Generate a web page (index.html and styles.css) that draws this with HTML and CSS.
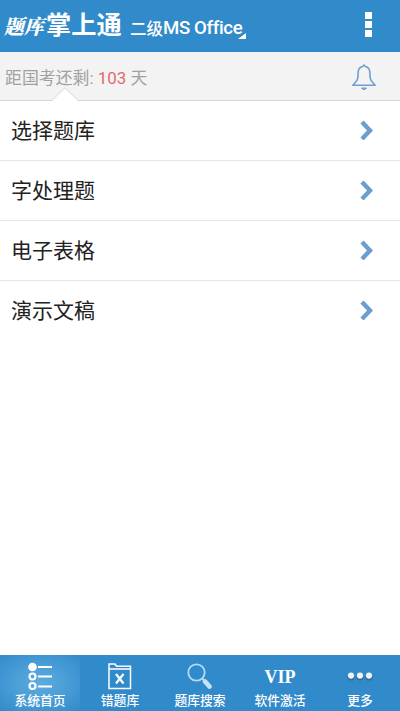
FILE: index.html
```html
<!DOCTYPE html>
<html lang="zh-CN">
<head>
<meta charset="utf-8">
<title>题库掌上通</title>
<link rel="stylesheet" href="styles.css">
</head>
<body>
<div class="app">
  <header class="header">
    <div class="brand"><span class="brush">题库</span><span class="name">掌上通</span></div>
    <div class="subject"><span class="level">二级</span><span class="office">MS Office</span><i class="corner"></i></div>
    <div class="menu"><i></i><i></i><i></i></div>
  </header>
  <section class="countdown">
    <p>距国考还剩: <span class="days">103</span> 天</p>
    <svg class="bell" width="26" height="28" viewBox="0 0 26 28" fill="none" stroke="#6f9ed0" stroke-width="1.6" stroke-linejoin="round">
      <path d="M13 2.2L11.5 3.5C8.5 4.3 7.3 6 7.2 9L6.8 15C6.4 18.3 4 19.6 1.8 22.3H24.2C22 19.6 19.6 18.3 19.2 15L18.8 9C18.7 6 17.5 4.3 14.5 3.5Z"/>
      <path d="M11 25.2H15L13 26.3Z"/>
    </svg>
    <svg class="notch" width="28" height="15" viewBox="0 0 28 15"><path d="M0 15L1 13.5L14 .7L27 13.5L28 15Z" fill="#fff"/><path d="M0 13.5H1L14 .7L27 13.5H28" fill="none" stroke="#d8d8d8"/></svg>
  </section>
  <main class="list">
    <div class="row"><span>选择题库</span><svg class="chevron" width="14" height="20" viewBox="0 0 14 20"><path d="M2 2L10 10.5L2 19"/></svg></div>
    <div class="row"><span>字处理题</span><svg class="chevron" width="14" height="20" viewBox="0 0 14 20"><path d="M2 2L10 10.5L2 19"/></svg></div>
    <div class="row"><span>电子表格</span><svg class="chevron" width="14" height="20" viewBox="0 0 14 20"><path d="M2 2L10 10.5L2 19"/></svg></div>
    <div class="row"><span>演示文稿</span><svg class="chevron" width="14" height="20" viewBox="0 0 14 20"><path d="M2 2L10 10.5L2 19"/></svg></div>
  </main>
  <nav class="tabs">
    <div class="tab active">
      <svg width="28" height="30" viewBox="0 0 28 30" fill="none" stroke="#fff"><circle cx="6.5" cy="5" r="4.3" fill="#fff" stroke="none"/><circle cx="6.5" cy="14.5" r="3" stroke-width="2.2"/><circle cx="6.5" cy="24" r="3" stroke-width="2.2"/><path d="M12 5H26M12 14.5H26M12 24.5H26" stroke-width="1.8"/></svg>
      <span>系统首页</span>
    </div>
    <div class="tab">
      <svg width="28" height="30" viewBox="0 0 28 30" fill="none" stroke="#fff" stroke-width="1.5"><path d="M3 26.5V2H9L10.5 4.2H24.5V26.5ZM3 7H24.5"/><path d="M10 12L17.5 21.5M17.5 12L10 21.5" stroke-width="2.2"/></svg>
      <span>错题库</span>
    </div>
    <div class="tab">
      <svg width="28" height="30" viewBox="0 0 28 30" fill="none"><circle cx="10.5" cy="10.5" r="8.2" stroke="#b5dbf2" stroke-width="1.8"/><path d="M16 16L18 18.5" stroke="#b5dbf2" stroke-width="2"/><path d="M19 19.5L23.5 24.5" stroke="#c5e3f5" stroke-width="4.8" stroke-linecap="round"/></svg>
      <span>题库搜索</span>
    </div>
    <div class="tab"><b class="vip">VIP</b><span>软件激活</span></div>
    <div class="tab">
      <svg width="28" height="30" viewBox="0 0 28 30"><g fill="#35698f"><circle cx="5" cy="14.9" r="3.5"/><circle cx="14" cy="14.9" r="3.5"/><circle cx="23" cy="14.9" r="3.5"/></g><g fill="#eef3f6"><circle cx="5" cy="13.6" r="3.1"/><circle cx="14" cy="13.6" r="3.1"/><circle cx="23" cy="13.6" r="3.1"/></g></svg>
      <span>更多</span>
    </div>
  </nav>
</div>
</body>
</html>
```
FILE: styles.css
```css
* { box-sizing: border-box; }
body {
  margin: 0;
  background: #fff;
  font-family: Roboto, "Noto Sans CJK SC", sans-serif;
}
.app {
  display: flex;
  flex-direction: column;
  width: 400px;
  height: 711px;
  overflow: hidden;
}
.header {
  display: flex;
  align-items: center;
  height: 52px;
  padding: 0 28px 0 4px;
  background: #318aca;
  color: #fff;
  white-space: nowrap;
}
.brand {
  display: flex;
  align-items: center;
  width: 126px;
  margin-top: -1px;
  line-height: 36px;
}
.brush {
  width: 42px;
  font: italic 900 20px/36px "Noto Serif CJK SC", "Noto Sans CJK SC", serif;
}
.name { font-size: 25.2px; font-weight: 700; }
.subject {
  display: flex;
  align-items: center;
  height: 36px;
  margin-top: 3px;
}
.level { font-size: 16.5px; font-weight: 500; }
.office { font-size: 18.6px; font-weight: 500; letter-spacing: -.35px; }
.corner {
  align-self: flex-end;
  margin: 0 0 7px -4px;
  border-left: 8px solid transparent;
  border-bottom: 6px solid #fff;
}
.menu {
  display: flex;
  flex-direction: column;
  gap: 2px;
  margin-left: auto;
  margin-top: -3px;
}
.menu i { width: 7px; height: 7px; background: #fff; }
.countdown {
  position: relative;
  display: flex;
  align-items: center;
  justify-content: space-between;
  height: 49px;
  padding: 1px 23px 0 5px;
  border-bottom: 1px solid #d8d8d8;
  background: #f3f3f3;
  color: #a1a1a1;
}
.countdown p { margin: -1px 0 0; font-size: 16.9px; font-weight: 400; }
.days { color: #e36a6c; }
.notch { position: absolute; left: 51px; bottom: -2px; }
.list { flex: 1; }
.row {
  display: flex;
  align-items: center;
  justify-content: space-between;
  height: 60px;
  padding: 0 26px 2px 11px;
  border-bottom: 1px solid #e5e5e5;
  color: #222;
  font-size: 21px;
}
.row span { margin-top: -2px; }
.row:last-child { border-bottom-color: transparent; }
.chevron { fill: none; stroke: #6b9dcf; stroke-width: 4.4; }
.tabs {
  display: grid;
  grid-template-columns: repeat(5, 1fr);
  height: 56px;
  background: #318aca;
  color: #fff;
}
.tab {
  display: flex;
  flex-direction: column;
  align-items: center;
  padding-top: 7px;
  font-size: 12.8px;
  font-weight: 500;
  line-height: 17px;
}
.tab.active { background: radial-gradient(ellipse at center, #5eaadf 0%, #4b9fd8 45%, #318aca 100%); }
.vip {
  height: 30px;
  font: 700 18px/30px "Liberation Serif", serif;
}
```
